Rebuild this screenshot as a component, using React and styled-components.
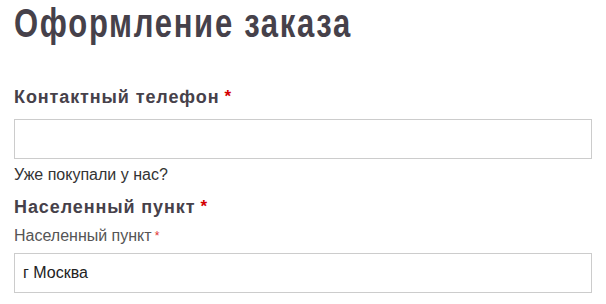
import React from 'react';
import styled, { createGlobalStyle } from 'styled-components';

const GlobalStyle = createGlobalStyle`
  html, body {
    margin: 0;
    padding: 0;
    background: #fff;
  }
  body {
    font-family: "Liberation Sans", Arial, sans-serif;
    color: #333;
  }
`;

const Page = styled.div`
  padding: 1px 14px 0 14px;
  display: flex;
  flex-direction: column;
`;

// narrow bold face is not installed, so the regular bold is squeezed
const Title = styled.h1`
  margin: 0 0 41px 0;
  font-weight: 700;
  font-size: 40px;
  line-height: 44px;
  letter-spacing: 2.2px;
  color: #46414a;
  white-space: nowrap;
  transform: scaleX(0.775);
  transform-origin: left center;
`;

const Heading = styled.h2`
  margin: 0 0 ${(p) => p.$gap}px 0;
  font-weight: 700;
  font-size: 18px;
  line-height: 22px;
  letter-spacing: 0.9px;
  color: #46414a;
`;

const Star = styled.span`
  color: ${(p) => (p.$soft ? '#e03030' : '#d40000')};
  font-size: ${(p) => (p.$soft ? 12 : 17)}px;
  margin-left: ${(p) => (p.$soft ? 3 : 5)}px;
  vertical-align: top;
  line-height: 1;
  position: relative;
  top: ${(p) => (p.$soft ? 4 : 2)}px;
`;

const Input = styled.input`
  box-sizing: border-box;
  width: 100%;
  height: 40px;
  margin: 0;
  padding: 0 8px;
  border: 1px solid #cccccc;
  border-radius: 0;
  background: #fff;
  font-family: "Liberation Sans", Arial, sans-serif;
  font-size: 16px;
  color: #222;
  outline: none;
`;

const Hint = styled.div`
  margin: 6px 0 11px 0;
  font-size: 16px;
  line-height: 20px;
  color: #333;
`;

const Label = styled.label`
  display: block;
  margin: 0 0 7px 0;
  font-size: 16px;
  line-height: 20px;
  color: #555;
`;

export default function App() {
  return (
    <>
      <GlobalStyle />
      <Page>
        <Title>Оформление заказа</Title>
        <Heading $gap={11}>
          Контактный телефон<Star>*</Star>
        </Heading>
        <Input type="tel" />
        <Hint>Уже покупали у нас?</Hint>
        <Heading $gap={8}>
          Населенный пункт<Star>*</Star>
        </Heading>
        <Label>
          Населенный пункт<Star $soft>*</Star>
        </Label>
        <Input type="text" defaultValue="г Москва" />
      </Page>
    </>
  );
}
